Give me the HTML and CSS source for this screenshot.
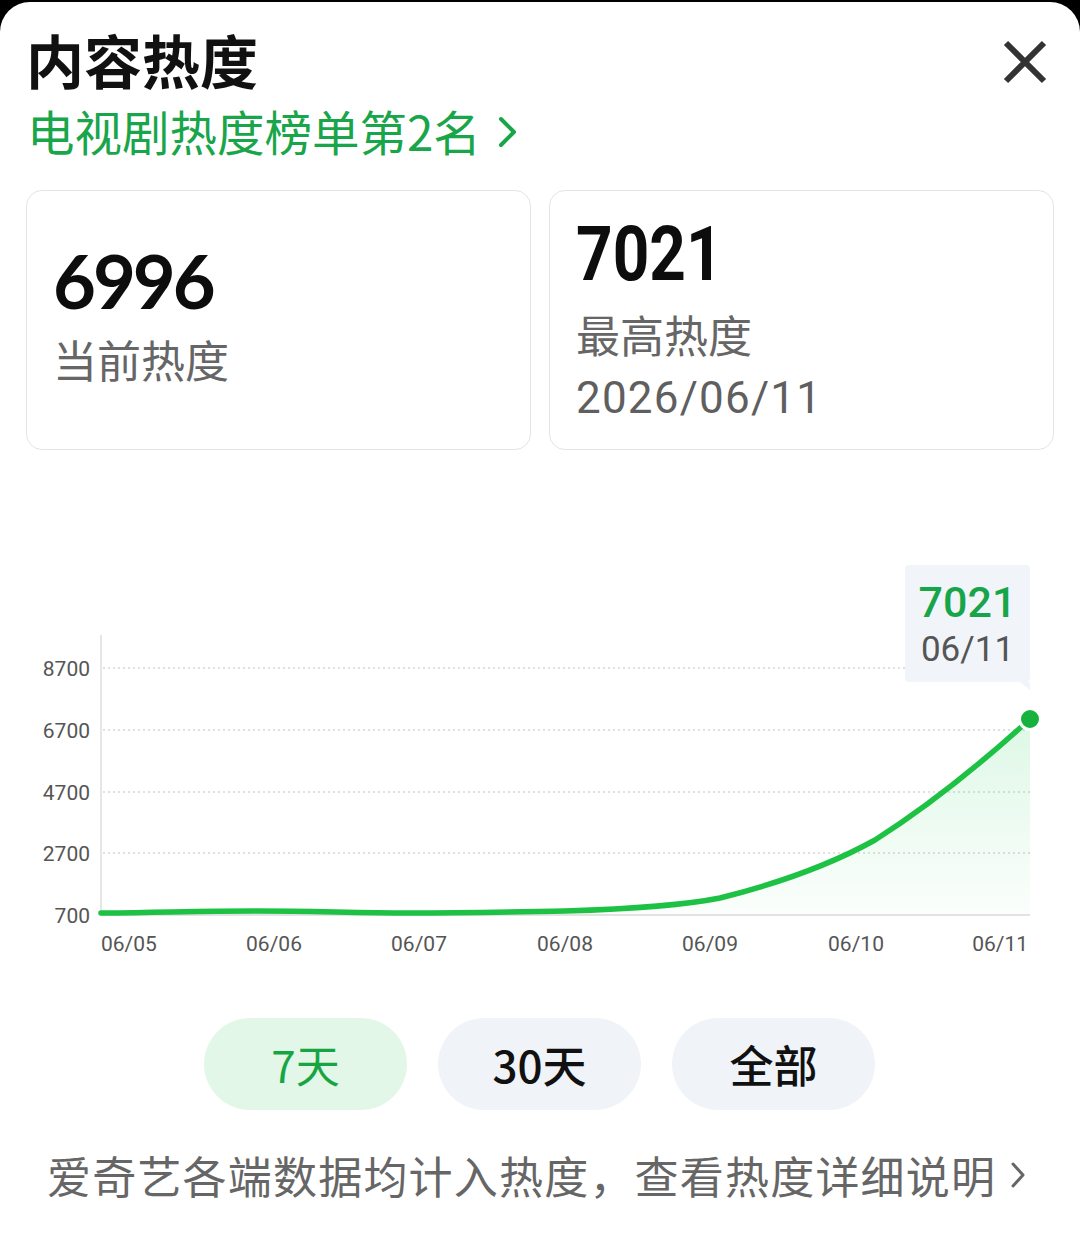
FILE: index.html
```html
<!DOCTYPE html>
<html lang="zh-CN">
<head>
<meta charset="utf-8">
<title>内容热度</title>
<link rel="stylesheet" href="styles.css">
</head>
<body>
<div class="sheet">
  <header class="header">
    <h1 class="title">内容热度</h1>
    <svg class="close" width="44" height="44" viewBox="0 0 44 44"><path d="M3 3 L41 41 M41 3 L3 41" stroke="#333" stroke-width="6" stroke-linecap="butt" fill="none"/></svg>
  </header>
  <a class="rank">电视剧热度榜单第2名<svg class="rank-chev" width="22" height="34" viewBox="0 0 22 34"><path d="M4 4 L17 17 L4 30" stroke="#19a54a" stroke-width="4" fill="none" stroke-linecap="round" stroke-linejoin="round"/></svg></a>

  <section class="cards">
    <div class="card">
      <div class="num num-cur">6996</div>
      <div class="label">当前热度</div>
    </div>
    <div class="card">
      <div class="num num-max"><span class="narrow">7021</span></div>
      <div class="label">最高热度</div>
      <div class="label date">2026/06/11</div>
    </div>
  </section>

  <section class="chart">
    <svg class="chart-svg" width="1080" height="440" viewBox="0 0 1080 440">
      <defs>
        <linearGradient id="fillg" x1="0" y1="0" x2="0" y2="1">
          <stop offset="0" stop-color="#2fd264" stop-opacity="0.16"/>
          <stop offset="1" stop-color="#2fd264" stop-opacity="0.02"/>
        </linearGradient>
      </defs>
      <g class="grid" stroke="#d6d6d6" stroke-width="1.5" stroke-dasharray="2 3">
        <line x1="103" y1="128" x2="1030" y2="128"/>
        <line x1="103" y1="190" x2="1030" y2="190"/>
        <line x1="103" y1="252" x2="1030" y2="252"/>
        <line x1="103" y1="313" x2="1030" y2="313"/>
      </g>
      <line x1="101" y1="95" x2="101" y2="375" stroke="#e6e6e6" stroke-width="2"/>
      <line x1="101" y1="375" x2="1030" y2="375" stroke="#e3e3e3" stroke-width="2"/>
      <g class="ylab" font-family="Roboto, 'Noto Sans', sans-serif" font-size="21" fill="#555" text-anchor="end">
        <text x="90" y="136">8700</text>
        <text x="90" y="198">6700</text>
        <text x="90" y="260">4700</text>
        <text x="90" y="321">2700</text>
        <text x="90" y="383">700</text>
      </g>
      <path d="M101,373 C180,372 200,371 256,371 C320,371 350,373 411,373 C470,373 510,372 565,371 C630,369 680,366 720,358 C780,343 830,325 875,300 C930,265 985,220 1030,179 L1030,375 L101,375 Z" fill="url(#fillg)"/>
      <path d="M101,373 C180,372 200,371 256,371 C320,371 350,373 411,373 C470,373 510,372 565,371 C630,369 680,366 720,358 C780,343 830,325 875,300 C930,265 985,220 1030,179" fill="none" stroke="#1dc143" stroke-width="5.5" stroke-linecap="round"/>
      <circle cx="1030" cy="179" r="10.5" fill="#17b23d" stroke="#fff" stroke-width="3"/>
      <g class="xlab" font-family="Roboto, 'Noto Sans', sans-serif" font-size="21" fill="#555">
        <text x="101" y="411">06/05</text>
        <text x="274" y="411" text-anchor="middle">06/06</text>
        <text x="419" y="411" text-anchor="middle">06/07</text>
        <text x="565" y="411" text-anchor="middle">06/08</text>
        <text x="710" y="411" text-anchor="middle">06/09</text>
        <text x="856" y="411" text-anchor="middle">06/10</text>
        <text x="1028" y="411" text-anchor="end">06/11</text>
      </g>
    </svg>
    <div class="tip">
      <div class="tip-val">7021</div>
      <div class="tip-date">06/11</div>
    </div>
  </section>

  <nav class="ranges">
    <button class="pill active">7天</button>
    <button class="pill">30天</button>
    <button class="pill">全部</button>
  </nav>

  <p class="note">爱奇艺各端数据均计入热度，查看热度详细说明<svg class="note-chev" width="20" height="34" viewBox="0 0 20 34"><path d="M5 6 L15 17 L5 28" stroke="#666" stroke-width="3" fill="none" stroke-linecap="round" stroke-linejoin="round"/></svg></p>
</div>
</body>
</html>
```

FILE: styles.css
```css
* { box-sizing: border-box; }
html, body { margin: 0; padding: 0; }
body {
  background: #000;
  width: 1080px;
  height: 1235px;
  overflow: hidden;
  font-family: "Noto Sans CJK SC", "Noto Sans", sans-serif;
}
.sheet {
  margin-top: 2px;
  background: #fff;
  border-radius: 30px 30px 0 0;
  height: 1233px;
  padding-top: 25px;
}
.header {
  display: flex;
  justify-content: space-between;
  align-items: center;
  padding: 0 33px 0 26px;
  height: 64px;
}
.title {
  margin: 0;
  font-size: 58px;
  line-height: 64px;
  font-weight: 700;
  color: #111;
}
.close { display: block; margin-top: 6px; }
.rank {
  display: flex;
  align-items: center;
  margin: 12px 0 0 27px;
  height: 56px;
  font-size: 47.5px;
  line-height: 56px;
  color: #19a54a;
}
.rank-chev { margin-left: 16px; margin-top: 2px; }
.cards {
  display: flex;
  gap: 18px;
  padding: 0 26px;
  margin-top: 31px;
}
.card {
  flex: 1;
  height: 260px;
  border: 1.5px solid #e4e4e4;
  border-radius: 16px;
  display: flex;
  flex-direction: column;
  justify-content: center;
  padding-left: 26px;
}
.num { color: #0d0d0d; line-height: 1; }
.num-cur {
  font-family: Lato, "Noto Sans", sans-serif;
  font-weight: 700;
  font-size: 74px;
  letter-spacing: -3px;
  margin-bottom: 15px;
  margin-top: -12px;
}
.num-max {
  font-family: Roboto, "Noto Sans", sans-serif;
  font-weight: 700;
  font-size: 76px;
  margin-bottom: 16px;
}
.narrow {
  display: inline-block;
  transform: scaleX(0.84);
  transform-origin: left center;
}
.label {
  font-size: 44px;
  line-height: 52px;
  color: #666;
}
.date {
  font-family: Roboto, "Noto Sans", sans-serif;
  margin-top: 12px;
  color: #5f5f5f;
  letter-spacing: 1.2px;
}
.chart {
  position: relative;
  height: 440px;
  margin-top: 90px;
}
.chart-svg { display: block; }
.tip {
  position: absolute;
  left: 905px;
  top: 25px;
  width: 125px;
  height: 117px;
  background: #f1f4f9;
  border-radius: 4px;
  text-align: center;
  font-family: Roboto, "Noto Sans", sans-serif;
  padding-top: 11px;
}
.tip::after {
  content: "";
  position: absolute;
  right: 0;
  bottom: -8px;
  border-top: 8px solid #f1f4f9;
  border-left: 10px solid transparent;
}
.tip-val {
  font-size: 43px;
  line-height: 52px;
  font-weight: 500;
  color: #18a54a;
}
.tip-date {
  font-size: 35px;
  line-height: 44px;
  color: #555;
}
.ranges {
  display: flex;
  justify-content: center;
  gap: 31px;
  margin-top: 38px;
  margin-left: -1px;
}
.pill {
  width: 203px;
  height: 92px;
  border: none;
  border-radius: 46px;
  background: #f0f3f8;
  font-family: "Noto Sans CJK SC", "Noto Sans", sans-serif;
  font-size: 44px;
  font-weight: 500;
  color: #111;
  padding: 0;
}
.pill.active {
  background: #e3f7e8;
  color: #17a543;
  font-weight: 400;
}
.note {
  display: flex;
  align-items: center;
  margin: 35px 0 0 47px;
  font-size: 44px;
  line-height: 60px;
  color: #666;
  letter-spacing: 1.2px;
}
.note-chev { margin-left: 12px; }
```
